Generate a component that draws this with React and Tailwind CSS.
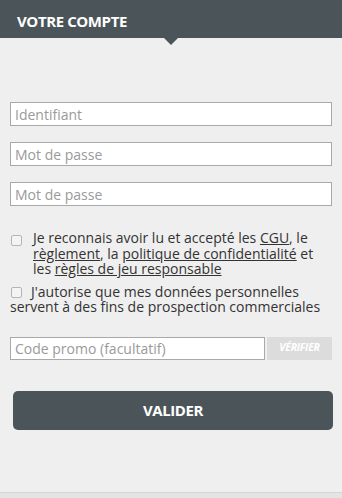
import React from 'react'

const Field = ({ placeholder, type = "text" }) => (
  <input
    type={type}
    placeholder={placeholder}
    className="block w-full h-[24px] bg-white border border-[#a9a9a9] px-[4px] text-[14px] text-[#333] placeholder:text-[#9a9a9a] outline-none"
  />
);

const Box = () => (
  <span className="inline-block w-[11px] h-[11px] border border-[#b5b5b5] rounded-[2px] bg-[#f4f4f4] align-[-1px]"></span>
);

const App = () => {
  return (
    <div className="w-[342px] h-[498px] bg-[#efefef] font-['Open_Sans',sans-serif] flex flex-col">
      <div className="relative h-[38px] bg-[#4b5559] shrink-0">
        <h1 className="pl-[17px] pt-[12px] text-white font-bold text-[15px] tracking-[-0.4px] leading-[18px]">
          VOTRE COMPTE
        </h1>
        <span className="absolute left-[164px] top-[38px] w-0 h-0 border-l-[7px] border-r-[7px] border-t-[7px] border-l-transparent border-r-transparent border-t-[#4b5559]"></span>
      </div>

      <div className="px-[10px] pt-[64px] flex flex-col gap-[16px]">
        <Field placeholder="Identifiant" />
        <Field placeholder="Mot de passe" type="password" />
        <Field placeholder="Mot de passe" type="password" />
      </div>

      <div className="px-[10px] mt-[24px] text-[14px] leading-[15.5px] text-[#333]">
        <div className="flex gap-[11px]">
          <div className="pt-[2px] pl-[1px]"><Box /></div>
          <p>
            Je reconnais avoir lu et accepté les <u>CGU</u>, le{" "}
            <u>règlement</u>, la <u>politique de confidentialité</u> et
            les <u>règles de jeu responsable</u>
          </p>
        </div>
        <p className="mt-[7px]">
          <span className="pl-[1px] pr-[9px]"><Box /></span>J'autorise que mes données personnelles servent à des fins de prospection commerciales
        </p>
      </div>

      <div className="px-[10px] mt-[22px] flex gap-[2px]">
        <input
          placeholder="Code promo (facultatif)"
          className="block w-[255px] h-[23px] bg-white border border-[#a9a9a9] px-[4px] text-[14px] placeholder:text-[#9a9a9a] outline-none"
        />
        <button className="flex-1 h-[23px] bg-[#dcdcdc] text-white text-[10.5px] font-bold italic tracking-[-0.3px]">
          VÉRIFIER
        </button>
      </div>

      <div className="pl-[13px] pr-[9px] mt-[31px]">
        <button className="w-full h-[39px] rounded-[5px] bg-[#4b5559] text-white font-bold text-[15px] tracking-[-0.4px]">
          VALIDER
        </button>
      </div>

      <div className="flex-1"></div>
      <div className="h-[6px] bg-[#e4e4e4] border-t border-[#d6d6d6]"></div>
    </div>
  );
};

export default App
